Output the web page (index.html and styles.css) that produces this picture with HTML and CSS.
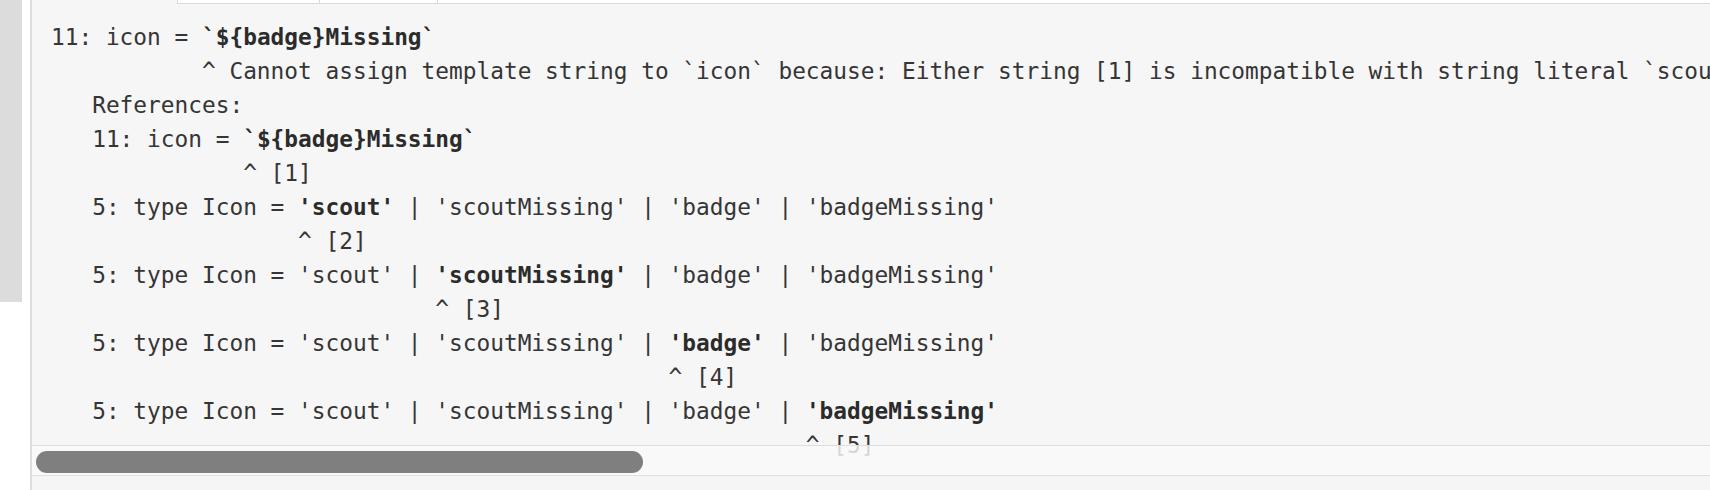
FILE: index.html
```html
<!DOCTYPE html>
<html>
<head>
<meta charset="utf-8">
<link rel="stylesheet" href="styles.css">
</head>
<body>
<div class="page">
  <div class="side"></div>
  <div class="panel">
    <div class="tabs">
      <div class="tab-spacer"></div>
      <div class="tab tab-1"></div>
      <div class="tab tab-2"></div>
      <div class="tab tab-3"></div>
    </div>
    <div class="code-area">
<pre class="code">11: icon = <b>`${badge}Missing`</b>
           ^ Cannot assign template string to `icon` because: Either string [1] is incompatible with string literal `scout` [2]. Or string [1] is incompatible with string literal `scoutMissing` [3]. Or string [1] is incompatible with string literal `badge` [4]. Or string [1] is incompatible with string literal `badgeMissing` [5].
   References:
   11: icon = <b>`${badge}Missing`</b>
              ^ [1]
   5: type Icon = <b>'scout'</b> | 'scoutMissing' | 'badge' | 'badgeMissing'
                  ^ [2]
   5: type Icon = 'scout' | <b>'scoutMissing'</b> | 'badge' | 'badgeMissing'
                            ^ [3]
   5: type Icon = 'scout' | 'scoutMissing' | <b>'badge'</b> | 'badgeMissing'
                                             ^ [4]
   5: type Icon = 'scout' | 'scoutMissing' | 'badge' | <b>'badgeMissing'</b>
                                                       ^ [5]</pre>
      <div class="hscroll">
        <div class="thumb"></div>
      </div>
    </div>
    <div class="footer"></div>
  </div>
</div>
</body>
</html>
```

FILE: styles.css
```css
html, body {
  margin: 0;
  padding: 0;
  background: #ffffff;
}

.page {
  display: flex;
  align-items: flex-start;
  gap: 8px;
  width: 1710px;
  height: 490px;
  overflow: hidden;
}

.side {
  width: 22px;
  height: 302px;
  background: #dcdcdc;
  flex: none;
}

.panel {
  flex: 1;
  height: 490px;
  border-left: 2px solid #dddddd;
  background: #f6f6f6;
  display: flex;
  flex-direction: column;
  min-width: 0;
}

.tabs {
  display: flex;
  height: 4px;
  flex: none;
}

.tab-spacer {
  width: 145px;
  flex: none;
}

.tab {
  background: #ffffff;
  border-left: 1px solid #d9d9d9;
  border-bottom: 1px solid #d9d9d9;
  flex: none;
}

.tab-1 { width: 141px; }
.tab-2 { width: 117px; }
.tab-3 { flex: 1; }

.code-area {
  position: relative;
  flex: 1;
  overflow: hidden;
  min-height: 0;
}

.code {
  margin: 0;
  padding: 16px 0 0 19px;
  font-family: "DejaVu Sans Mono", monospace;
  font-size: 22.8px;
  line-height: 34px;
  color: #353535;
  white-space: pre;
}

.code b {
  font-weight: bold;
  color: #2b2b2b;
}

.hscroll {
  position: absolute;
  left: 0;
  right: 0;
  bottom: 0;
  height: 30px;
  border-top: 1px solid #dedede;
  background: rgba(249, 249, 249, 0.82);
  box-sizing: border-box;
  padding: 5px 0 0 4px;
}

.thumb {
  width: 607px;
  height: 22px;
  border-radius: 11px;
  background: #7f7f7f;
}

.footer {
  height: 14px;
  flex: none;
  border-top: 1px solid #e0e0e0;
  background: #f5f5f5;
}
```
